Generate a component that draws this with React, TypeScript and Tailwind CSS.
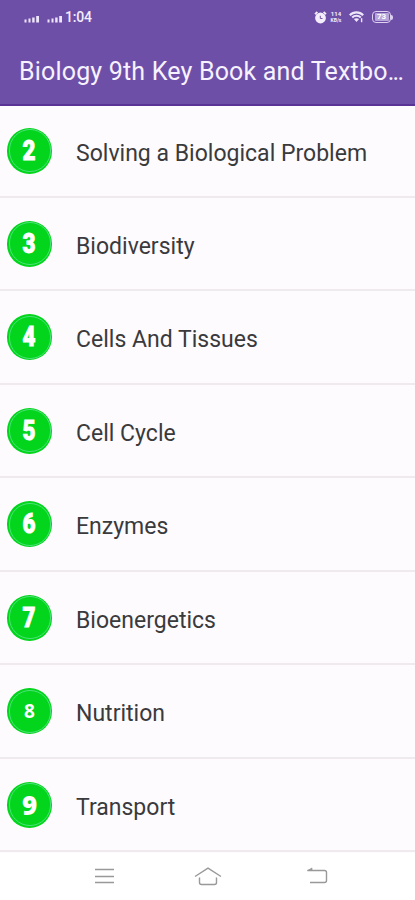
import clsx from "clsx";

interface Chapter {
  number: number;
  title: string;
  numberClass: string;
}

const narrow = "text-[28px] font-black scale-x-[0.8] [-webkit-text-stroke:0.9px_white]";

const chapters: Chapter[] = [
  { number: 2, title: "Solving a Biological Problem", numberClass: narrow },
  { number: 3, title: "Biodiversity", numberClass: narrow },
  { number: 4, title: "Cells And Tissues", numberClass: narrow },
  { number: 5, title: "Cell Cycle", numberClass: narrow },
  { number: 6, title: "Enzymes", numberClass: narrow },
  { number: 7, title: "Bioenergetics", numberClass: narrow },
  { number: 8, title: "Nutrition", numberClass: "text-[19px] font-bold font-['Open_Sans',sans-serif]" },
  { number: 9, title: "Transport", numberClass: "text-[26px] font-extrabold font-['Open_Sans',sans-serif]" },
];

function Signal() {
  return (
    <svg width="16" height="8" viewBox="0 0 16 8" fill="#ede6fa">
      <rect x="0.5" y="4.5" width="2" height="3" />
      <rect x="4.5" y="3.5" width="2" height="4" />
      <rect x="8.2" y="2.5" width="2.4" height="5" />
      <rect x="12.2" y="1" width="2.8" height="6.5" />
    </svg>
  );
}

function StatusBar() {
  return (
    <div className="flex h-[34px] items-center pl-[24px] pr-[22px] text-[#f3edfc]">
      <div className="mt-[4px] flex gap-[7px]">
        <Signal />
        <Signal />
      </div>
      <span className="ml-[2px] text-[14px] font-medium leading-none tracking-[-0.2px]">1:04</span>
      <div className="ml-auto flex items-center">
        {/* Alarm clock */}
        <svg width="13" height="13" viewBox="0 0 13 13" fill="none">
          <path d="M1 3.2 3.4 1M12 3.2 9.6 1" stroke="#f3edfc" strokeWidth="1.8" />
          <circle cx="6.5" cy="7" r="5.4" fill="#f3edfc" />
          <path d="M6.3 4.8v2.7h2.2" stroke="#7453ab" strokeWidth="1" />
        </svg>
        <div className="ml-[2px] flex w-[14px] flex-col items-center text-[6px] font-bold leading-[7px]">
          <span>114</span>
          <span className="text-[5px]">KB/s</span>
        </div>
        <svg className="ml-[6px]" width="15" height="12" viewBox="0 0 15 12" fill="none" stroke="#ede6fa" strokeWidth="2.1">
          <path d="M.8 4.2C4.5.4 10.5.4 14.2 4.2" />
          <path d="M3.2 6.5c2.4-2.3 6.2-2.3 8.6 0" />
          <path d="m4.9 8.1 2.6 3 2.6-3c-1.5-1.3-3.7-1.3-5.2 0Z" fill="#ede6fa" stroke="none" />
          <path d="M12.6 7.2v4" strokeWidth="1.4" />
        </svg>
        {/* Battery */}
        <div className="ml-[8px] flex h-[12px] w-[19px] items-center justify-center rounded-[4px] border border-[#ddd0f1]">
          <div className="flex h-[8px] w-[14px] items-center justify-center rounded-[1px] bg-[#b8a5d9] text-[8px] font-bold leading-none text-white">
            73
          </div>
        </div>
        <div className="h-[5px] w-[2px] rounded-r bg-[#ddd0f1]" />
      </div>
    </div>
  );
}

function ChapterRow({ chapter, first }: { chapter: Chapter; first: boolean }) {
  return (
    <li
      className={clsx(
        "flex shrink-0 items-center border-b-2 border-[#eeeaee] pl-[7px]",
        first ? "h-[91.5px]" : "h-[93.5px] pt-px"
      )}
    >
      <div className="flex h-[46px] w-[45px] shrink-0 items-center justify-center rounded-full bg-[#03d51c] p-[1.5px]">
        <div className="flex size-full items-center justify-center rounded-full border border-[#4be27a]">
          <span className={clsx("block leading-none text-white", chapter.numberClass)}>{chapter.number}</span>
        </div>
      </div>
      <span className="ml-[24px] mt-[5.5px] whitespace-nowrap text-[23px] leading-7 tracking-[0.01px] text-[#3a3a3c]">
        {chapter.title}
      </span>
    </li>
  );
}

function NavBar() {
  return (
    <nav className="flex h-[47px] items-center justify-between bg-white pb-px pl-[94px] pr-[87px]">
      <svg width="21" height="18" viewBox="0 0 21 18" stroke="#999" strokeWidth="1.5">
        <path d="M1 2.5h19M1 9.5h19M1 15.5h19" />
      </svg>
      <svg className="-ml-[5px]" width="28" height="20" viewBox="0 0 28 20" fill="none" stroke="#999" strokeWidth="1.4">
        <path d="M1 10.5 14 2.2l13 8.3" />
        <path d="M5.5 11.5v5q0 2 2 2h13q2 0 2-2v-5" />
      </svg>
      <svg width="22" height="18" viewBox="0 0 22 18" fill="none" stroke="#999" strokeWidth="1.4">
        <path d="M1.5 3.5h17q2 0 2 2v8q0 2-2 2H4" />
        <path d="M1.5 3.5 6 1v2.5Z" fill="#999" strokeWidth="0.7" />
      </svg>
    </nav>
  );
}

export default function App() {
  return (
    <div className="flex h-[900px] w-[415px] flex-col overflow-hidden bg-[#fdfbfe] font-['Roboto',sans-serif]">
      <header className="h-[106px] shrink-0 border-b-2 border-[#5a3396] bg-[#6e4fa8]">
        <StatusBar />
        <h1 className="mt-[22px] whitespace-nowrap pl-[19px] text-[25px] leading-8 tracking-[0.18px] text-[#f7f2ff]">
          Biology 9th Key Book and Textbo<span className="tracking-[-1.7px]">...</span>
        </h1>
      </header>
      <ul className="flex h-[747px] shrink-0 flex-col overflow-hidden">
        {chapters.map((chapter, i) => (
          <ChapterRow key={chapter.number} chapter={chapter} first={i === 0} />
        ))}
      </ul>
      <NavBar />
    </div>
  );
}
